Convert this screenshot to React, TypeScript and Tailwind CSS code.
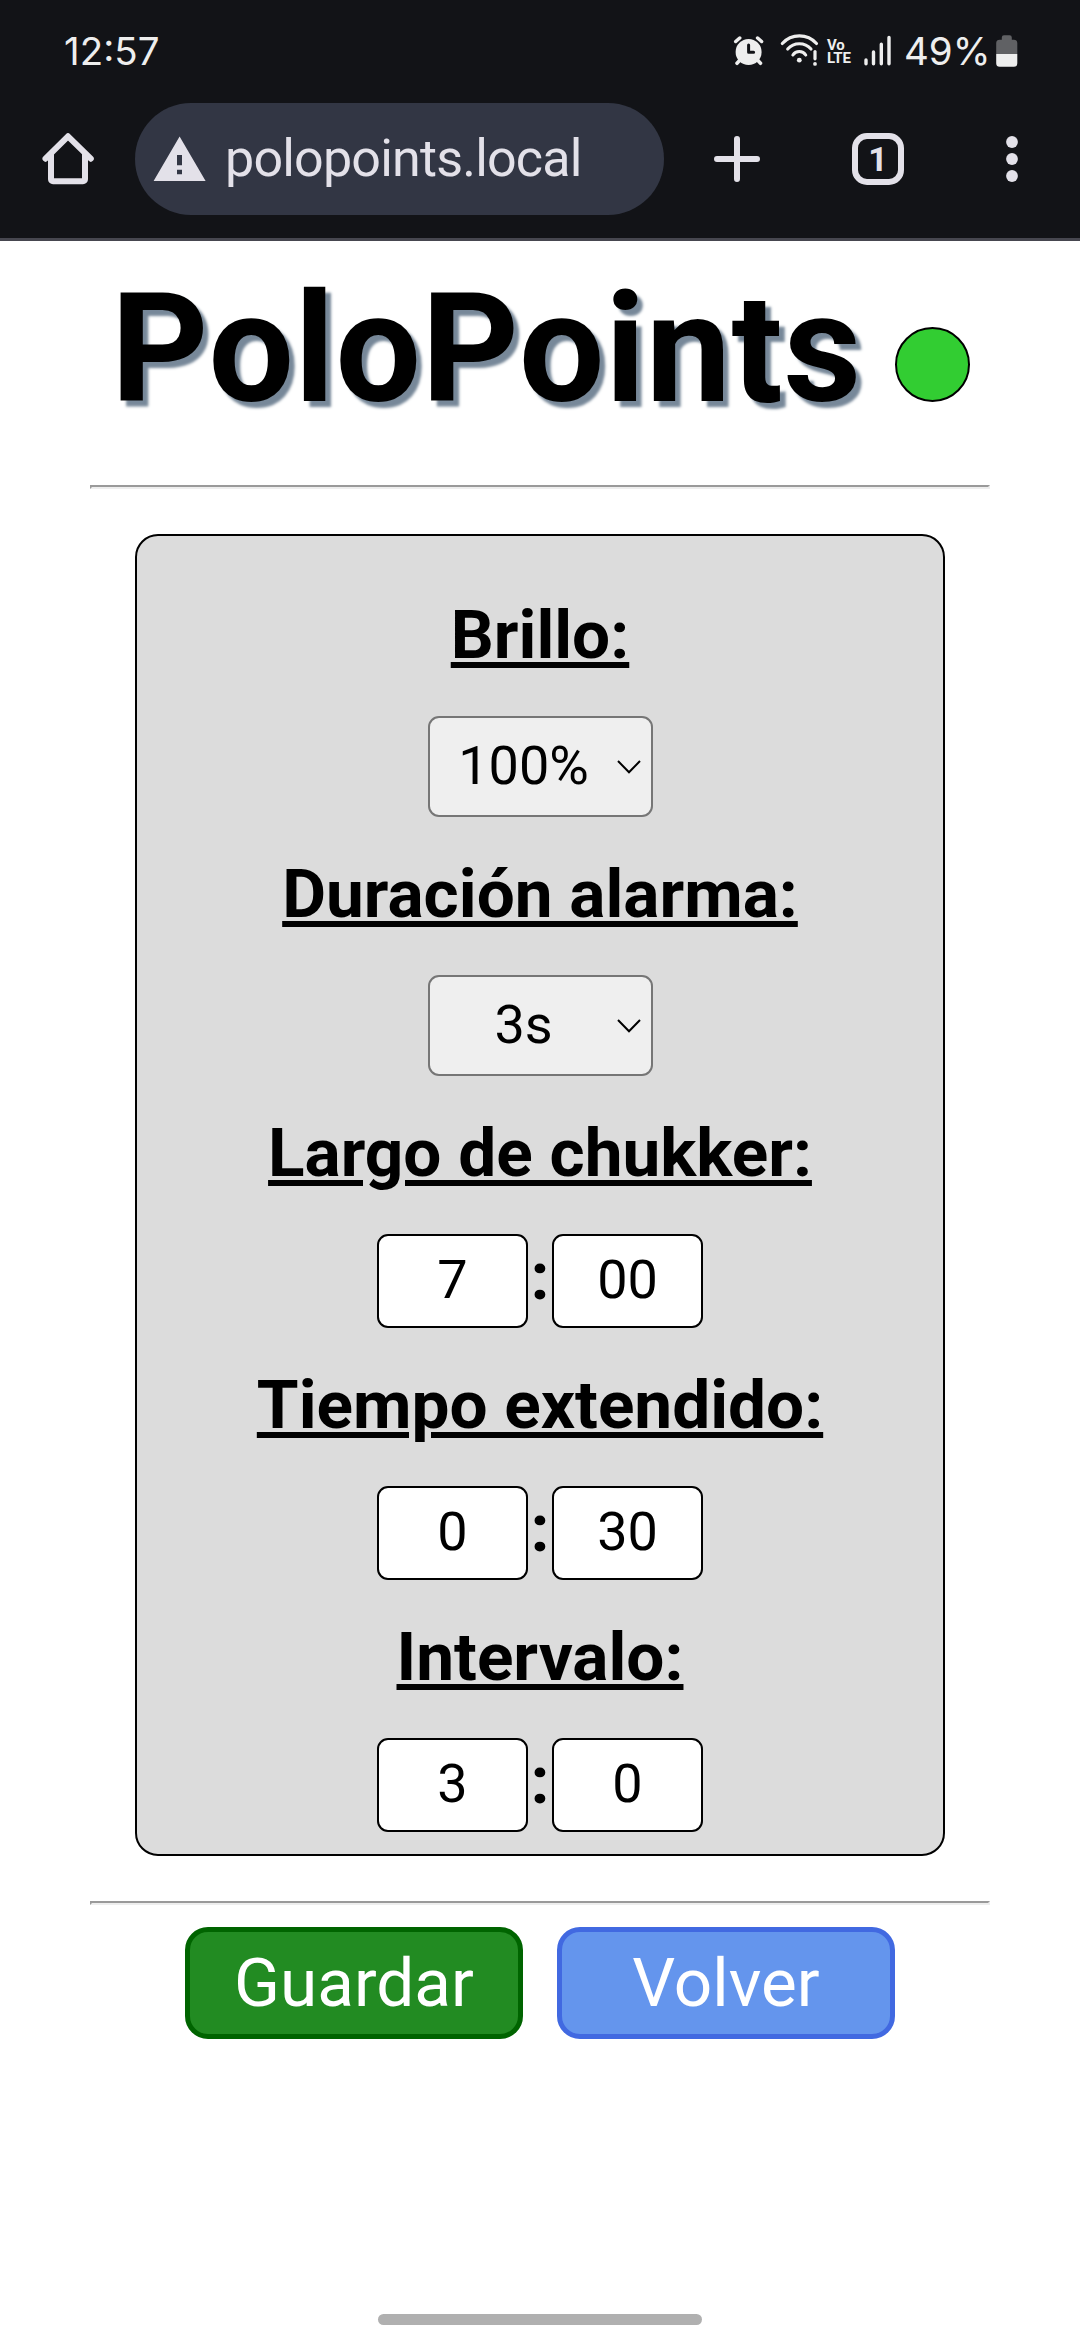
import React from "react";

function StatusBar() {
  return (
    <div className="flex h-[103px] items-start pt-[28px] text-[#eeeeee]">
      <span className="ml-[64px] w-[110px] font-['Inter',sans-serif] text-[38.5px] leading-[46px]">12:57</span>
      <svg className="ml-auto" width="92" height="46" viewBox="732 28 92 46" fill="none">
        <circle cx="748.600" cy="52" r="13" fill="#eee" />
        <path d="M748.600 45v7.300h5" stroke="#121317" strokeWidth="3" strokeLinecap="round" strokeLinejoin="round" />
        <path d="M735.700 41.500l4-3.500M761.600 41.500l-4-3.500M740 60l-3 3.300M757.500 60l3 3.300" stroke="#eee" strokeWidth="3.500" strokeLinecap="round" />
        <path d="M782.300 43.500a23 23 0 0 1 34.200 0M787.700 49a15.500 15.500 0 0 1 23.300 0M792.900 55a7.600 7.600 0 0 1 12.800 0" stroke="#eee" strokeWidth="3.100" strokeLinecap="round" />
        <circle cx="799.300" cy="60.200" r="2.400" fill="#eee" />
        <path d="M815 51.500v7.300" stroke="#eee" strokeWidth="3.200" strokeLinecap="round" />
        <circle cx="815" cy="63.900" r="1.900" fill="#eee" />
      </svg>
      <span className="mt-[11px] ml-[3px] flex w-[28px] flex-col text-[15px] leading-[13px] font-bold tracking-[-0.1px]">
        <span>Vo</span>
        <span>LTE</span>
      </span>
      <svg className="ml-[9px]" width="28" height="46" viewBox="864 28 28 46" stroke="#eee" strokeWidth="3.400" strokeLinecap="round">
        <path d="M866 60v3.700M873.500 52v11.700M881.300 44.300v19.400M889 37.500v26.200" />
      </svg>
      <span className="ml-[12px] w-[85px] whitespace-nowrap font-['Inter',sans-serif] text-[38.5px] leading-[46px]">49%</span>
      <svg className="mr-[62px] ml-[6px]" width="23" height="46" viewBox="995 28 23 46">
        <path d="M996.200 54V43a3.500 3.500 0 0 1 3.500-3.300h2.100v-2.200a2.200 2.200 0 0 1 2.200-2.200h5.600a2.200 2.200 0 0 1 2.200 2.200v2.200h2a3.500 3.500 0 0 1 3.500 3.300v11z" fill="#606164" />
        <path d="M996.200 54h21.100v9.200a3.500 3.500 0 0 1-3.500 3.500h-14.100a3.500 3.500 0 0 1-3.500-3.500z" fill="#eee" />
      </svg>
    </div>
  );
}

function Toolbar() {
  return (
    <div className="flex h-[112px] items-center text-[#e3e1e9]">
      <svg className="ml-[41px]" width="54" height="56" viewBox="41 131 54 56" fill="none" stroke="currentColor" strokeWidth="6" strokeLinejoin="round">
        <path d="M45.500 158.700L68 136.300 90.800 158.700" strokeLinecap="round" />
        <path d="M51 154v25.300a2 2 0 0 0 2 2h30a2 2 0 0 0 2-2V154" />
      </svg>
      <div className="ml-[40px] flex h-[112px] w-[529px] items-center rounded-full bg-[#323644]">
        <svg className="ml-[18px]" width="53" height="46" viewBox="153 133 53 46">
          <path fillRule="evenodd" d="M179.600 133.500l26 44.500h-52zM177 152v10.300h5V152zM177 166.700v4.500h5v-4.500z" fill="currentColor" />
        </svg>
        <span className="ml-[19px] text-[52px] leading-[60px] tracking-[-0.8px]">polopoints.local</span>
      </div>
      <svg className="ml-[50px]" width="46" height="46" viewBox="0 0 46 46" stroke="currentColor" strokeWidth="6" strokeLinecap="round">
        <path d="M23 3v40M3 23h40" />
      </svg>
      <div className="ml-[92px] flex h-[52px] w-[52px] items-center justify-center rounded-[15px] border-6 border-current text-[34px] leading-none font-bold">
        1
      </div>
      <svg className="ml-[101px]" width="14" height="48" viewBox="0 0 14 48" fill="currentColor">
        <circle cx="7" cy="7" r="5.900" />
        <circle cx="7" cy="24" r="5.900" />
        <circle cx="7" cy="41" r="5.900" />
      </svg>
    </div>
  );
}

function Label({ children }: { children: React.ReactNode }) {
  return (
    <h2 className="text-center text-[67.5px] leading-[80px] font-bold underline decoration-[6px] underline-offset-[4px]">{children}</h2>
  );
}

function Select({ value }: { value: string }) {
  return (
    <button className="mx-auto flex h-[101px] w-[225px] items-center rounded-[11px] border-2 border-[#767676] bg-[#efefef] pr-[10px] text-[54px] leading-[64px]">
      <span className="flex-1 pb-[2px] pl-[1px] text-center">{value}</span>
      <svg width="24" height="14" viewBox="0 0 24 14" fill="none" stroke="#000" strokeWidth="2">
        <path d="M1 1l11 11.300L23 1" />
      </svg>
    </button>
  );
}

function TimeInput({ minutes, seconds }: { minutes: string; seconds: string }) {
  const box =
    "flex h-[94px] w-[151px] items-center justify-center rounded-[11px] border-2 border-black bg-white pb-[3px] text-[54px] leading-[64px]";
  return (
    <div className="flex h-[94px] items-center justify-center">
      <div className={box}>{minutes}</div>
      <span className="flex w-[24px] justify-center pb-[10px] text-[67.5px] leading-[80px] font-bold">:</span>
      <div className={box}>{seconds}</div>
    </div>
  );
}

function Divider() {
  return (
    <div className="mx-auto h-[4px] w-[900px] border-2 border-t-[#9a9a9a] border-r-[#eeeeee] border-b-[#eeeeee] border-l-[#9a9a9a]" />
  );
}

export default function App() {
  return (
    <div className="flex h-[2340px] w-[1080px] flex-col bg-white font-['Roboto',sans-serif] text-black">
      <header className="h-[241px] border-b-3 border-[#46464f] bg-[#121317]">
        <StatusBar />
        <Toolbar />
      </header>

      <div className="flex h-[244px] items-start pt-[20px]">
        <h1 className="ml-[111px] text-[151.5px] leading-[177px] font-bold tracking-[0.7px] [text-shadow:5.6px_5.6px_2.8px_#778899]">
          PoloPoints
        </h1>
        <span className="mt-[66px] mr-[110px] ml-auto h-[75px] w-[75px] rounded-full border-2 border-black bg-[#32cd32]" />
      </div>

      <Divider />

      <main className="mx-auto mt-[45px] flex h-[1322px] w-[810px] flex-col rounded-[23px] border-2 border-black bg-[#dcdcdc] pt-[59px]">
        <Label>Brillo:</Label>
        <div className="mt-[41px]"><Select value="100%" /></div>
        <div className="mt-[37px]"><Label>Duración alarma:</Label></div>
        <div className="mt-[41px]"><Select value="3s" /></div>
        <div className="mt-[37px]"><Label>Largo de chukker:</Label></div>
        <div className="mt-[41px]"><TimeInput minutes="7" seconds="00" /></div>
        <div className="mt-[37px]"><Label>Tiempo extendido:</Label></div>
        <div className="mt-[41px]"><TimeInput minutes="0" seconds="30" /></div>
        <div className="mt-[37px]"><Label>Intervalo:</Label></div>
        <div className="mt-[41px]"><TimeInput minutes="3" seconds="0" /></div>
      </main>

      <div className="mt-[45px]"><Divider /></div>

      <div className="mt-[22px] flex justify-center gap-[34px] text-[67.5px] leading-[80px] text-white">
        <button className="flex h-[112px] w-[338px] items-center justify-center rounded-[23px] border-5 border-[#006400] bg-[#228b22]">
          Guardar
        </button>
        <button className="flex h-[112px] w-[338px] items-center justify-center rounded-[23px] border-5 border-[#4169e1] bg-[#6495ed]">
          Volver
        </button>
      </div>

      <div className="mx-auto mt-auto mb-[15px] h-[11px] w-[324px] rounded-full bg-[#b0b0b0]" />
    </div>
  );
}
